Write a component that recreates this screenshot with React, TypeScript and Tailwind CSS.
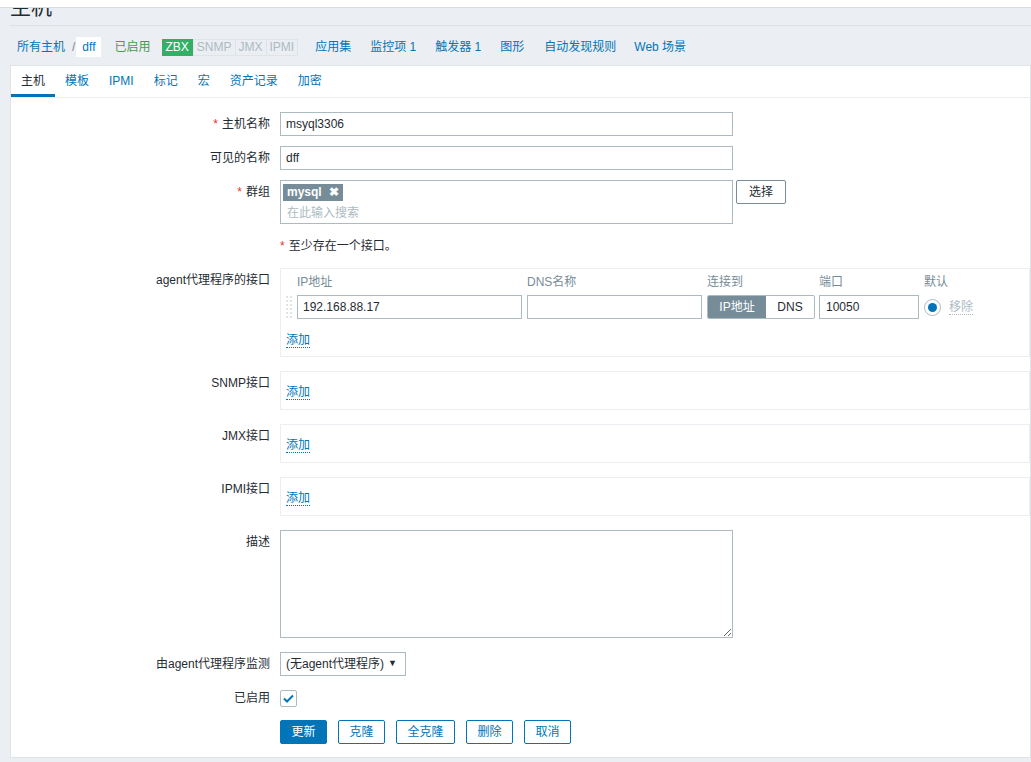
import React from "react";

const font = { fontFamily: '"Liberation Sans", Arial, "Noto Sans CJK SC", sans-serif' };

function Row({ label, req, children, mb = "mb-[10px]" }: { label: string; req?: boolean; children: React.ReactNode; mb?: string }) {
  return (
    <div className={`flex ${mb}`}>
      <div className="w-[259px] shrink-0 text-right pt-[4px] leading-[16px] text-[#1f2c33]">
        {req && <span className="text-[#e33734] mr-[4px]">*</span>}
        {label}
      </div>
      <div className="ml-[10px] flex-1">{children}</div>
    </div>
  );
}

function AddLink() {
  return <span className="text-[#0275b8] border-b border-dotted border-[#0275b8] leading-[14px]">添加</span>;
}

function DragHandle() {
  return (
    <div className="grid grid-cols-2 gap-x-[2px] gap-y-[2px] w-[6px]">
      {Array.from({ length: 12 }).map((_, i) => (
        <div key={i} className="w-[2px] h-[2px] bg-[#dfe4e7]" />
      ))}
    </div>
  );
}

export default function App() {
  return (
    <div className="w-[1031px] h-[762px] overflow-hidden bg-[#ebeef2] text-[12px] text-[#1f2c33]" style={font}>
      <div className="h-[8px] bg-white border-b border-[#d8dde1]" />
      <div className="ml-[10px]">
        <div className="h-[18px] overflow-hidden border-b border-[#dbe0e4]">
          <div className="text-[21px] leading-[21px] mt-[-12px] text-[#1f2c33]">主机</div>
        </div>
        <div className="h-[39px] pt-[3px] flex items-center text-[12px]">
          <span className="ml-[7px] text-[#0275b8]">所有主机</span>
          <span className="ml-[7px] text-[#768d99]">/</span>
          <span className="ml-[1px] bg-white h-[20px] px-[6px] flex items-center text-[#0275b8]">dff</span>
          <span className="ml-[13px] text-[#429e47]">已启用</span>
          <div className="ml-[11px] flex h-[17px] text-[12px] leading-[15px]">
            <span className="bg-[#34af67] text-white px-[3px] border border-[#34af67]">ZBX</span>
            <span className="text-[#acbbc2] bg-[#ebeef2] px-[3px] border border-[#dfe4e7]">SNMP</span>
            <span className="text-[#acbbc2] px-[3px] border border-l-0 border-[#dfe4e7]">JMX</span>
            <span className="text-[#acbbc2] px-[3px] border border-l-0 border-[#dfe4e7]">IPMI</span>
          </div>
          <span className="ml-[17px] text-[#0275b8]">应用集</span>
          <span className="ml-[19px] text-[#0275b8]">监控项 1</span>
          <span className="ml-[19px] text-[#0275b8]">触发器 1</span>
          <span className="ml-[19px] text-[#0275b8]">图形</span>
          <span className="ml-[20px] text-[#0275b8]">自动发现规则</span>
          <span className="ml-[18px] text-[#0275b8]">Web 场景</span>
        </div>
        <div className="bg-white border border-[#dfe4e7] h-[693px]">
          <div className="flex h-[32px] border-b border-[#ebeef2]">
            {["主机", "模板", "IPMI", "标记", "宏", "资产记录", "加密"].map((t, i) => (
              <div
                key={t}
                className={`px-[10px] pt-[2px] flex items-center border-b-[3px] ${i === 0 ? "border-[#0275b8] text-[#1f2c33]" : "border-transparent text-[#0275b8]"}`}
              >
                {t}
              </div>
            ))}
          </div>
          <div className="pt-[14px]">
            <Row label="主机名称" req>
              <div className="w-[453px] h-[24px] border border-[#acbbc2] px-[5px] flex items-center">msyql3306</div>
            </Row>
            <Row label="可见的名称">
              <div className="w-[453px] h-[24px] border border-[#acbbc2] px-[5px] flex items-center">dff</div>
            </Row>
            <Row label="群组" req>
              <div className="flex items-start">
                <div className="w-[453px] h-[44px] border border-[#acbbc2] pt-[2px] px-[2px]">
                  <span className="inline-flex items-center h-[17px] bg-[#768d99] text-white font-bold px-[4px] leading-[17px]">
                    mysql
                    <span className="ml-[7px] text-[12px]">✖</span>
                  </span>
                  <div className="text-[#acbbc2] pl-[4px] mt-[4px] leading-[16px]">在此输入搜索</div>
                </div>
                <div className="ml-[3px] h-[24px] px-[12px] border border-[#768d99] rounded-[2px] flex items-center text-[#1f2c33] bg-white">选择</div>
              </div>
            </Row>
            <Row label="">
              <div className="h-[24px] flex items-center">
                <span className="text-[#e33734] mr-[4px]">*</span>至少存在一个接口。
              </div>
            </Row>
            <Row label="agent代理程序的接口" mb="mb-[14px]">
              <div className="h-[89px] border border-[#ebeef2] pl-[5px]">
                <div className="flex h-[24px] items-end text-[#768d99] leading-[14px] pb-[4px]">
                  <div className="w-[11px]" />
                  <div className="w-[230px]">IP地址</div>
                  <div className="w-[180px]">DNS名称</div>
                  <div className="w-[112px]">连接到</div>
                  <div className="w-[105px]">端口</div>
                  <div>默认</div>
                </div>
                <div className="flex items-center h-[24px] mt-[2px]">
                  <div className="w-[11px]"><DragHandle /></div>
                  <div className="w-[225px] h-[24px] border border-[#acbbc2] px-[5px] flex items-center">192.168.88.17</div>
                  <div className="ml-[5px] w-[175px] h-[24px] border border-[#acbbc2]" />
                  <div className="ml-[5px] w-[108px] h-[24px] flex border border-[#acbbc2] rounded-[2px] overflow-hidden">
                    <div className="w-[58px] bg-[#768d99] text-white flex items-center justify-center">IP地址</div>
                    <div className="flex-1 flex items-center justify-center text-[#1f2c33]">DNS</div>
                  </div>
                  <div className="ml-[4px] w-[100px] h-[24px] border border-[#acbbc2] px-[6px] flex items-center">10050</div>
                  <div className="ml-[5px] w-[17px] h-[17px] rounded-full border border-[#acbbc2] flex items-center justify-center">
                    <div className="w-[9px] h-[9px] rounded-full bg-[#0275b8]" />
                  </div>
                  <span className="ml-[8px] text-[#acbbc2] border-b border-dotted border-[#acbbc2] leading-[14px]">移除</span>
                </div>
                <div className="mt-[12px]"><AddLink /></div>
              </div>
            </Row>
            {["SNMP接口", "JMX接口", "IPMI接口"].map((l) => (
              <Row key={l} label={l} mb="mb-[14px]">
                <div className="h-[39px] border border-[#ebeef2] pl-[5px] pt-[11px]">
                  <AddLink />
                </div>
              </Row>
            ))}
            <Row label="描述" mb="mb-[14px]">
              <textarea readOnly className="block w-[453px] h-[108px] border border-[#acbbc2] outline-none" />
            </Row>
            <Row label="由agent代理程序监测">
              <div className="w-[126px] h-[24px] border border-[#acbbc2] flex items-center pl-[5px] pr-[8px] justify-between">
                <span>(无agent代理程序)</span>
                <span className="text-[9px]">▼</span>
              </div>
            </Row>
            <Row label="已启用">
              <div className="h-[24px] flex items-center">
                <div className="w-[17px] h-[17px] border border-[#acbbc2] rounded-[2px] flex items-center justify-center">
                  <svg width="11" height="9" viewBox="0 0 11 9"><path d="M1 4.5 L4 7.5 L10 1.5" stroke="#0275b8" strokeWidth="2" fill="none" /></svg>
                </div>
              </div>
            </Row>
            <Row label="">
              <div className="flex gap-[11px]">
                <div className="h-[24px] w-[47px] bg-[#0275b8] border border-[#0275b8] rounded-[2px] text-white flex items-center justify-center">更新</div>
                <div className="h-[24px] w-[47px] border border-[#0275b8] rounded-[2px] text-[#0275b8] flex items-center justify-center">克隆</div>
                <div className="h-[24px] w-[59px] border border-[#0275b8] rounded-[2px] text-[#0275b8] flex items-center justify-center">全克隆</div>
                <div className="h-[24px] w-[47px] border border-[#0275b8] rounded-[2px] text-[#0275b8] flex items-center justify-center">删除</div>
                <div className="h-[24px] w-[47px] border border-[#0275b8] rounded-[2px] text-[#0275b8] flex items-center justify-center">取消</div>
              </div>
            </Row>
          </div>
        </div>
      </div>
    </div>
  );
}
